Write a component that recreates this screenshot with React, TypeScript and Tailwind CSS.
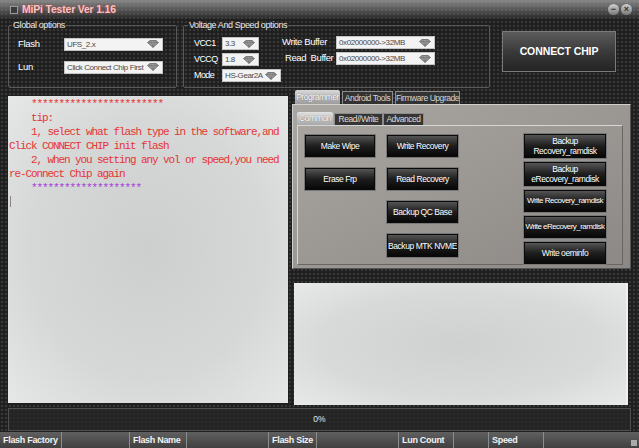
import React from 'react';

function Gem() {
  return (
    <svg width="12" height="8" viewBox="0 0 12 8" className="shrink-0">
      <path d="M0.5 2.5 L3 0.5 H9 L11.5 2.5 L6 7.5 Z" fill="#9a9a9a" stroke="#5a5a5a" strokeWidth="0.7" />
      <path d="M0.8 2.6 H11.2 M3 0.6 L4.5 2.6 L6 7.2 L7.5 2.6 L9 0.6" fill="none" stroke="#6a6a6a" strokeWidth="0.5" />
    </svg>
  );
}

function Combo({ value, className }: { value: string; className: string }) {
  return (
    <div className={`flex items-center h-[13px] bg-[#f3f3f3] border border-[#c4c4c4] text-[#4a4a4a] text-[8px] tracking-[-0.4px] leading-[11px] pl-[2px] pr-[3px] ${className}`}>
      <span className="flex-1 whitespace-nowrap overflow-hidden">{value}</span>
      <Gem />
    </div>
  );
}

function Btn({ children, className }: { children: React.ReactNode; className: string }) {
  return (
    <div
      className={`flex items-center justify-center text-center whitespace-nowrap overflow-hidden text-white text-[8.5px] tracking-[-0.45px] leading-[10px] bg-gradient-to-b from-[#555] via-[#1e1e1e] to-[#080808] border border-[#0a0a0a] shadow-[0_0_0_1px_#777] ${className}`}
    >
      {children}
    </div>
  );
}

const statusCells: { label: string; w: string }[] = [
  { label: 'Flash Factory', w: 'w-[62px]' },
  { label: '', w: 'w-[68px]' },
  { label: 'Flash Name', w: 'w-[57px]' },
  { label: '', w: 'w-[82px]' },
  { label: 'Flash Size', w: 'w-[48px]' },
  { label: '', w: 'w-[82px]' },
  { label: 'Lun Count', w: 'w-[55px]' },
  { label: '', w: 'w-[35px]' },
  { label: 'Speed', w: 'w-[55px]' },
];

export default function App() {
  return (
    <div className="w-[639px] h-[448px] overflow-hidden flex flex-col text-white bg-[#1f1f1f] bg-[radial-gradient(circle,#383838_1px,transparent_1.6px)] bg-[length:4px_4px] font-['Liberation_Sans',Arial,sans-serif]">
      {/* Title bar */}
      <div className="h-[19px] flex items-center pl-[10px] pr-[7px] bg-gradient-to-b from-[#a0a0a0]/80 to-[#3a3a3a]/30">
        <div className="w-[8px] h-[8px] border border-[#9a9a9a] bg-[#3a3a3a]" />
        <span className="ml-[4px] text-[10.5px] tracking-[-0.2px] font-bold text-[#f4c4c4] [text-shadow:0_0_2px_#c04040]">MiPi Tester Ver 1.16</span>
        <div className="ml-auto flex gap-[2px]">
          <div className="w-[11px] h-[11px] rounded-full bg-gradient-to-b from-[#d0d0d0] to-[#7a7a7a] flex items-center justify-center text-[#333] text-[9px] leading-none font-bold">−</div>
          <div className="w-[11px] h-[11px] rounded-full bg-gradient-to-b from-[#d0d0d0] to-[#7a7a7a] flex items-center justify-center text-[#333] text-[9px] leading-none font-bold">×</div>
        </div>
      </div>

      {/* Options */}
      <div className="flex h-[71px]">
        <fieldset className="ml-[8px] w-[169px] h-[69px] border border-[#585858] rounded-[2px]">
          <legend className="ml-[3px] px-[1px] text-[9px] tracking-[-0.4px] leading-[12px] text-[#eee]">Global options</legend>
          <div className="mt-[6px] flex flex-col gap-[9px]">
            <div className="flex items-center">
              <span className="w-[55px] pl-[9px] text-[9.5px] tracking-[-0.3px]">Flash</span>
              <Combo value="UFS_2.x" className="w-[99px]" />
            </div>
            <div className="flex items-center">
              <span className="w-[55px] pl-[9px] text-[9.5px] tracking-[-0.3px]">Lun</span>
              <Combo value="Click Connect Chip First" className="w-[99px]" />
            </div>
          </div>
        </fieldset>

        <fieldset className="ml-[6px] w-[307px] h-[69px] border border-[#585858] rounded-[2px]">
          <legend className="ml-[4px] px-[1px] text-[9px] tracking-[-0.4px] leading-[12px] text-[#eee]">Voltage And Speed options</legend>
          <div className="mt-[6px] flex">
            <div className="pl-[10px] flex flex-col gap-[3px]">
              <div className="flex items-center h-[13px]">
                <span className="w-[28px] text-[9px] tracking-[-0.6px] whitespace-nowrap">VCC1</span>
                <Combo value="3.3" className="w-[37px]" />
              </div>
              <div className="flex items-center h-[13px]">
                <span className="w-[28px] text-[9px] tracking-[-0.6px] whitespace-nowrap">VCCQ</span>
                <Combo value="1.8" className="w-[37px]" />
              </div>
              <div className="flex items-center h-[13px]">
                <span className="w-[28px] text-[9px] tracking-[-0.6px] whitespace-nowrap">Mode</span>
                <Combo value="HS-Gear2A" className="w-[59px]" />
              </div>
            </div>
            <div className="ml-[1px] -mt-[1px] flex flex-col gap-[3px]">
              <div className="flex items-center h-[13px]">
                <span className="w-[54px] text-[9.5px] tracking-[-0.4px] whitespace-nowrap">Write Buffer</span>
                <Combo value="0x02000000->32MB" className="w-[99px]" />
              </div>
              <div className="flex items-center h-[13px]">
                <span className="w-[54px] pl-[3px] text-[9.5px] tracking-[-0.4px] whitespace-nowrap">Read&nbsp; Buffer</span>
                <Combo value="0x02000000->32MB" className="w-[99px]" />
              </div>
            </div>
          </div>
        </fieldset>

        <div className="ml-[12px] mt-[12px] w-[114px] h-[41px] flex items-center justify-center border border-[#7a7a7a] bg-gradient-to-b from-[#5c5c5c] via-[#3a3a3a] to-[#242424] text-[10.5px] font-bold tracking-[-0.1px] text-white">
          CONNECT CHIP
        </div>
      </div>

      {/* Main */}
      <div className="flex h-[315px]">
        <div className="ml-[8px] mt-[6px] w-[280px] h-[307px] bg-[radial-gradient(ellipse_at_center,#cdcfcf_0%,#d6d7d7_60%,#e6e7e7_100%)] pt-[1px] pl-[1px] font-['Liberation_Mono',monospace] text-[11px] leading-[14px] tracking-[-1.1px] text-[#e53535]">
          <div className="whitespace-pre">{'    ************************'}</div>
          <div className="whitespace-pre">{'    tip:'}</div>
          <div className="whitespace-pre">{'    1, select what flash type in the software,and'}</div>
          <div className="whitespace-pre">{'Click CONNECT CHIP init flash'}</div>
          <div className="whitespace-pre">{'    2, when you setting any vol or speed,you need'}</div>
          <div className="whitespace-pre">{'re-Connect Chip again'}</div>
          <div className="whitespace-pre text-[#a43ad8]">{'    ********************'}</div>
          <div className="w-[1px] h-[11px] bg-[#888] ml-[1px] mt-[1px]" />
        </div>

        <div className="ml-[4px] w-[339px] flex flex-col">
          {/* Outer tabs */}
          <div className="h-[14px] flex items-end pl-[3px] gap-[2px] text-[8.5px] tracking-[-0.45px] leading-[11px] whitespace-nowrap">
            <div className="w-[45px] h-[14px] flex items-center justify-center rounded-t-[2px] bg-gradient-to-b from-[#d8d8d8] to-[#9c9c9c] text-white [text-shadow:0_0_1px_#555]">Programmer</div>
            <div className="w-[51px] h-[13px] flex items-center justify-center border border-b-0 border-[#8c8c8c] bg-[#333] text-[#d6d6d6]">Android Tools</div>
            <div className="w-[65px] h-[13px] flex items-center justify-center border border-b-0 border-[#8c8c8c] bg-[#333] text-[#d6d6d6]">Firmware Upgrade</div>
          </div>

          {/* Programmer panel */}
          <div className="h-[165px] pl-[4px] pt-[7px] bg-gradient-to-br from-[#aaa7a2] via-[#9b9894] to-[#8b8885] border border-[#cfcfcf] border-r-[#555] border-b-[#555]">
            <div className="h-[13px] flex items-end text-[8.5px] tracking-[-0.45px] leading-[11px] whitespace-nowrap">
              <div className="w-[36px] h-[13px] flex items-center justify-center rounded-t-[2px] bg-gradient-to-b from-[#e2e2e2] to-[#a8a8a8] text-white [text-shadow:0_0_1px_#555]">Common</div>
              <div className="ml-[1px] w-[49px] h-[12px] flex items-center justify-center border border-b-0 border-[#8c8c8c] bg-[#353535] text-[#ddd]">Read//Write</div>
              <div className="w-[41px] h-[12px] flex items-center justify-center border border-b-0 border-[#8c8c8c] bg-[#353535] text-[#ddd]">Advanced</div>
            </div>
            <div className="w-[326px] h-[140px] border border-[#d6d6d6] border-r-[#666] border-b-[#666] flex pl-[7px] pt-[9px]">
              <div className="w-[70px] flex flex-col gap-[11px]">
                <Btn className="h-[22px]">Make Wipe</Btn>
                <Btn className="h-[22px]">Erase Frp</Btn>
              </div>
              <div className="ml-[12px] w-[71px] flex flex-col gap-[11px]">
                <Btn className="h-[22px]">Write Recovery</Btn>
                <Btn className="h-[22px]">Read Recovery</Btn>
                <Btn className="h-[22px]">Backup QC Base</Btn>
                <Btn className="h-[23px]">Backup MTK NVME</Btn>
              </div>
              <div className="ml-auto mr-[16px] -mt-[1px] w-[82px] flex flex-col gap-[4px]">
                <Btn className="h-[24px] whitespace-normal">Backup<br />Recovery_ramdisk</Btn>
                <Btn className="h-[24px] whitespace-normal">Backup<br />eRecovery_ramdisk</Btn>
                <Btn className="h-[22px]"><span className="text-[8px] tracking-[-0.5px]">Write Recovery_ramdisk</span></Btn>
                <Btn className="h-[22px]"><span className="text-[8px] tracking-[-0.55px]">Write eRecovery_ramdisk</span></Btn>
                <Btn className="h-[22px]">Write oeminfo</Btn>
              </div>
            </div>
          </div>

          {/* Log */}
          <div className="mt-[14px] ml-[2px] w-[334px] h-[122px] bg-[radial-gradient(ellipse_at_center,#cfd0d0_0%,#d8d9d9_60%,#e8e9e9_100%)] border-r-[2px] border-[#f0f0f0]" />
        </div>
      </div>

      {/* Progress */}
      <div className="mt-[3px] mx-[8px] h-[23px] border border-[#4e4e4e] bg-[#262626]/70 flex items-center justify-center text-[8.5px] text-[#e6e6e6]">
        0%
      </div>

      {/* Status bar */}
      <div className="mt-[1px] h-[16px] flex bg-gradient-to-b from-[#606060] to-[#404040] text-[9px] tracking-[-0.3px] leading-[16px] font-bold text-[#f2f2f2]">
        {statusCells.map((c, i) => (
          <div key={i} className={`${c.w} h-full pl-[3px] border-r border-[#8c8c8c] whitespace-nowrap overflow-hidden`}>
            {c.label}
          </div>
        ))}
        <div className="flex-1 h-full flex items-end justify-end pr-[2px] pb-[2px]">
          <div className="w-[6px] h-[6px] bg-[radial-gradient(circle,#aaa_0.8px,transparent_1px)] bg-[length:2px_2px]" />
        </div>
      </div>
    </div>
  );
}
